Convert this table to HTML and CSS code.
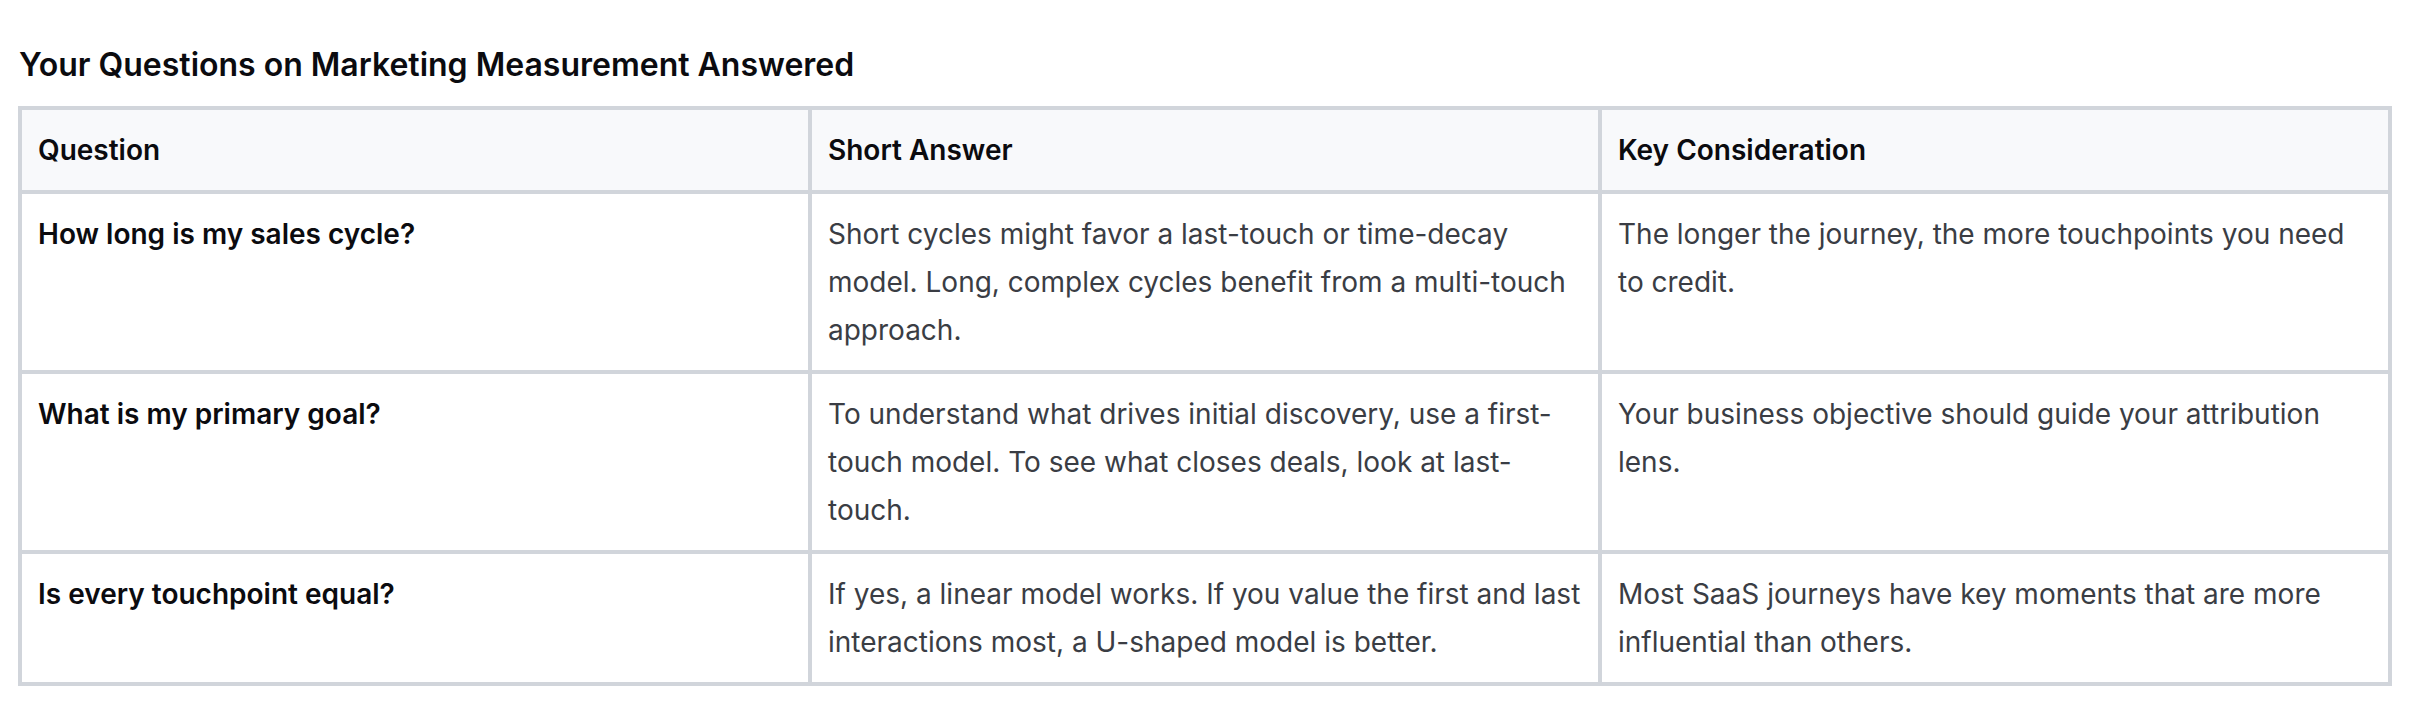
FILE: index.html
```html
<!DOCTYPE html>
<html lang="en">
<head>
<meta charset="utf-8">
<title>Your Questions on Marketing Measurement Answered</title>
<link rel="stylesheet" href="styles.css">
</head>
<body>
<main class="page">
  <h2 class="title">Your Questions on Marketing Measurement Answered</h2>
  <table class="faq">
    <thead>
      <tr>
        <th>Question</th>
        <th>Short Answer</th>
        <th>Key Consideration</th>
      </tr>
    </thead>
    <tbody>
      <tr>
        <td class="q">How long is my sales cycle?</td>
        <td>Short cycles might favor a last-touch or time-decay model. Long, complex cycles benefit from a multi-touch approach.</td>
        <td>The longer the journey, the more touchpoints you need to credit.</td>
      </tr>
      <tr>
        <td class="q">What is my primary goal?</td>
        <td>To understand what drives initial discovery, use a first-touch model. To see what closes deals, look at last-touch.</td>
        <td>Your business objective should guide your attribution lens.</td>
      </tr>
      <tr>
        <td class="q">Is every touchpoint equal?</td>
        <td>If yes, a linear model works. If you value the first and last interactions most, a U-shaped model is better.</td>
        <td>Most SaaS journeys have key moments that are more influential than others.</td>
      </tr>
    </tbody>
  </table>
</main>
</body>
</html>
```

FILE: styles.css
```css
html, body {
  margin: 0;
  padding: 0;
  background: #ffffff;
}

body {
  font-family: Inter, "Liberation Sans", Arial, sans-serif;
  color: #111827;
}

.page {
  padding: 45px 32px 0 18px;
}

.title {
  margin: 0 0 21px 1px;
  font-size: 32px;
  line-height: 40px;
  font-weight: 600;
  color: #0b0b0f;
}

.faq {
  width: 100%;
  border-collapse: collapse;
  table-layout: fixed;
  border: 4px solid #d1d5db;
}

.faq th,
.faq td {
  border: 4px solid #d1d5db;
  padding: 16px 16px;
  text-align: left;
  vertical-align: top;
  font-size: 28px;
  line-height: 48px;
}

.faq th {
  background: #f8f9fb;
  font-weight: 600;
  color: #0b0b0f;
}

.faq td {
  font-weight: 400;
  color: #3a3d44;
}

.faq td.q {
  font-weight: 600;
  color: #0b0b0f;
}
```
